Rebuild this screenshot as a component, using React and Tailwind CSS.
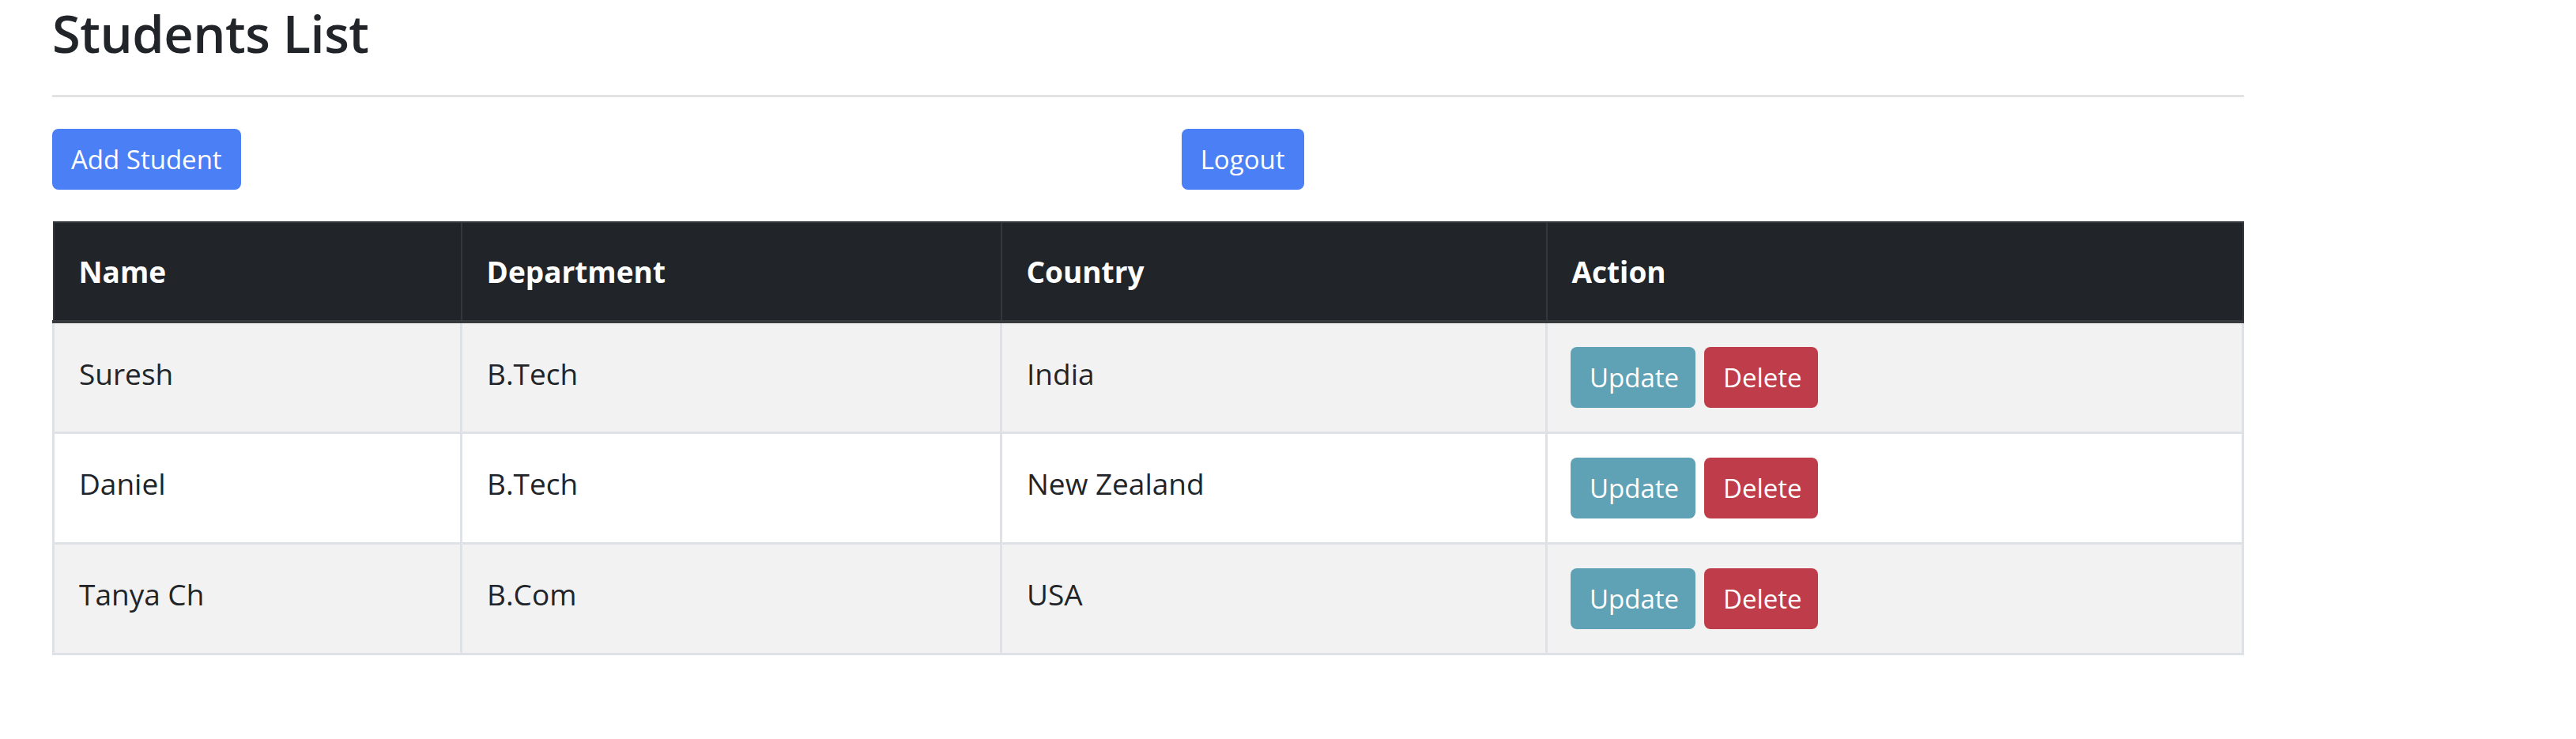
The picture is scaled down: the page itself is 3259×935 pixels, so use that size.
const students = [
  { name: "Suresh", department: "B.Tech", country: "India" },
  { name: "Daniel", department: "B.Tech", country: "New Zealand" },
  { name: "Tanya Ch", department: "B.Com", country: "USA" },
];

function Btn({ children, className = "" }) {
  return (
    <button
      className={`h-[77px] rounded-[8px] px-[24px] text-[33px] leading-none text-white ${className}`}
    >
      {children}
    </button>
  );
}

export default function App() {
  return (
    <div className="min-h-screen w-full bg-white pl-[66px] font-['Open_Sans',sans-serif] text-[#212529]">
      <div className="w-[2773px]">
        <h2 className="pt-[3px] text-[65px] leading-[79px] font-semibold tracking-[-0.5px]">
          Students List
        </h2>
        <hr className="mt-[38px] border-t-[3px] border-[#e3e3e3]" />

        <div className="mt-[40px] flex">
          <Btn className="bg-[#4a7ff6]">Add Student</Btn>
          <Btn className="ml-[1190px] bg-[#4a7ff6]">Logout</Btn>
        </div>

        <table className="mt-[40px] w-full border-collapse text-[37px]">
          <thead>
            <tr className="h-[126px] bg-[#212529] text-left text-white">
              <th className="w-[516px] border-2 border-b-4 border-[#32383e] border-b-[#373b3e] px-[31px] font-bold">
                Name
              </th>
              <th className="w-[683px] border-2 border-b-4 border-[#32383e] border-b-[#373b3e] px-[31px] font-bold">
                Department
              </th>
              <th className="w-[690px] border-2 border-b-4 border-[#32383e] border-b-[#373b3e] px-[31px] font-bold">
                Country
              </th>
              <th className="border-2 border-b-4 border-[#32383e] border-b-[#373b3e] px-[31px] font-bold">
                Action
              </th>
            </tr>
          </thead>
          <tbody>
            {students.map((s, i) => (
              <tr
                key={s.name}
                className={`h-[140px] ${i % 2 === 0 ? "bg-[#f2f2f2]" : "bg-white"}`}
              >
                <td className="border-[3px] border-[#dee2e6] px-[31px] pb-[10px]">{s.name}</td>
                <td className="border-[3px] border-[#dee2e6] px-[31px] pb-[10px]">{s.department}</td>
                <td className="border-[3px] border-[#dee2e6] px-[31px] pb-[10px]">{s.country}</td>
                <td className="border-[3px] border-[#dee2e6] px-[29px]">
                  <div className="flex gap-[11px]">
                    <Btn className="w-[158px] px-0 bg-[#5fa1b5]">Update</Btn>
                    <Btn className="w-[144px] px-0 bg-[#bf3c4a]">Delete</Btn>
                  </div>
                </td>
              </tr>
            ))}
          </tbody>
        </table>
      </div>
    </div>
  );
}
